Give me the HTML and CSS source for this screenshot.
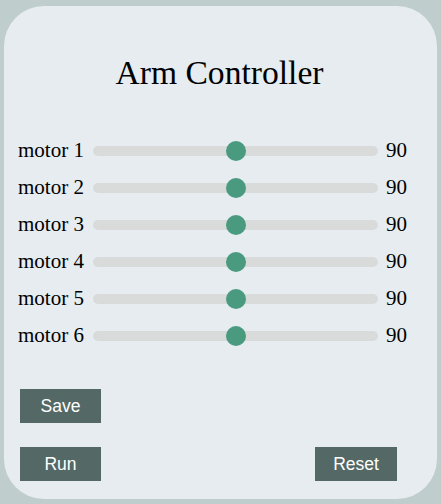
FILE: index.html
```html
<!DOCTYPE html>
<html>
<head>
<meta charset="utf-8">
<link rel="stylesheet" href="styles.css">
</head>
<body>
<div class="card">
  <h1 class="title">Arm Controller</h1>
  <div class="motors">
    <div class="row"><span class="label">motor 1</span><input class="slider" type="range" min="0" max="180" value="90"><span class="value">90</span></div>
    <div class="row"><span class="label">motor 2</span><input class="slider" type="range" min="0" max="180" value="90"><span class="value">90</span></div>
    <div class="row"><span class="label">motor 3</span><input class="slider" type="range" min="0" max="180" value="90"><span class="value">90</span></div>
    <div class="row"><span class="label">motor 4</span><input class="slider" type="range" min="0" max="180" value="90"><span class="value">90</span></div>
    <div class="row"><span class="label">motor 5</span><input class="slider" type="range" min="0" max="180" value="90"><span class="value">90</span></div>
    <div class="row"><span class="label">motor 6</span><input class="slider" type="range" min="0" max="180" value="90"><span class="value">90</span></div>
  </div>
  <div class="actions">
    <div class="btn-row"><button class="btn">Save</button></div>
    <div class="btn-row split"><button class="btn">Run</button><button class="btn">Reset</button></div>
  </div>
</div>
</body>
</html>
```
FILE: styles.css
```css
html, body {
  margin: 0;
  padding: 0;
  background: #bfcdcd;
  font-family: "Liberation Serif", "Times New Roman", serif;
  color: #000;
}
.card {
  box-sizing: border-box;
  margin: 6px 4px 0 4px;
  width: 433px;
  height: 493px;
  background: #e6ecef;
  border-radius: 40px;
  padding: 48px 0 0 0;
}
.title {
  margin: 0;
  font-size: 33.6px;
  font-weight: normal;
  line-height: 37px;
  text-align: center;
  padding-right: 2px;
}
.motors {
  margin-top: 41px;
  padding-left: 14px;
}
.row {
  display: flex;
  align-items: center;
  height: 37px;
}
.label {
  width: 75px;
  font-size: 21px;
}
.slider {
  -webkit-appearance: none;
  appearance: none;
  margin: 0;
  width: 285px;
  height: 10px;
  border-radius: 5px;
  background: #d9dbdb;
  outline: none;
}
.slider::-webkit-slider-thumb {
  -webkit-appearance: none;
  appearance: none;
  width: 20px;
  height: 20px;
  border-radius: 50%;
  background: #4a9a80;
  border: none;
}
.value {
  margin-left: 8px;
  font-size: 21px;
}
.actions {
  margin-top: 35px;
  padding-left: 16px;
  padding-right: 40px;
  display: flex;
  flex-direction: column;
  gap: 24px;
}
.btn-row {
  display: flex;
}
.split {
  justify-content: space-between;
}
.btn {
  width: 81px;
  height: 34px;
  border: none;
  border-radius: 0;
  background: #546965;
  color: #fff;
  font-family: "Liberation Sans", Arial, sans-serif;
  font-size: 17.5px;
  padding: 0;
}
.split .btn:last-child {
  width: 82px;
}
```
